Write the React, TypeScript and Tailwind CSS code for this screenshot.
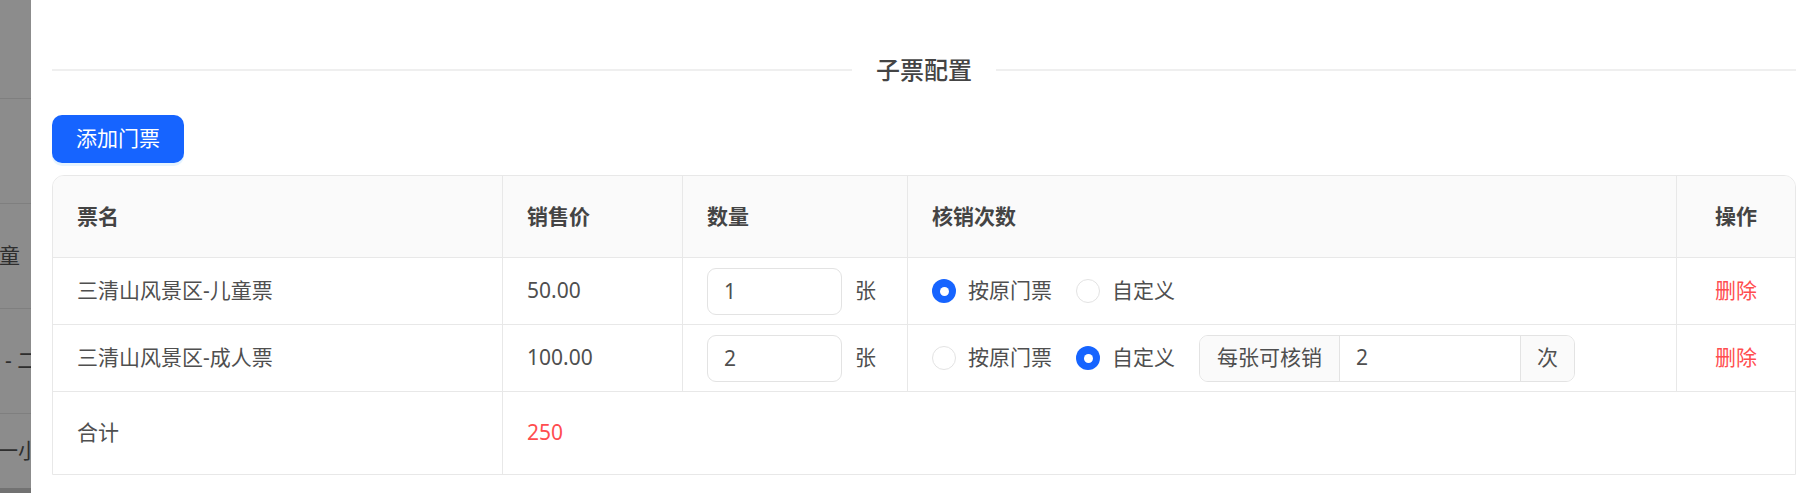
import React, { useState } from 'react';

type Ticket = { id: number; name: string; price: string; qty: string; mode: 'origin' | 'custom'; times: string };

const initial: Ticket[] = [
  { id: 1, name: '三清山风景区-儿童票', price: '50.00', qty: '1', mode: 'origin', times: '' },
  { id: 2, name: '三清山风景区-成人票', price: '100.00', qty: '2', mode: 'custom', times: '2' },
];

const Radio: React.FC<{ checked: boolean; label: string; onClick: () => void }> = ({ checked, label, onClick }) => (
  <label onClick={onClick} className="flex items-center gap-[12px] cursor-pointer">
    {checked ? (
      <span className="w-[24px] h-[24px] rounded-full bg-[#1664ff] flex items-center justify-center">
        <span className="w-[9px] h-[9px] rounded-full bg-white" />
      </span>
    ) : (
      <span className="w-[24px] h-[24px] rounded-full border-[1.5px] border-[#e3e3e3] bg-white" />
    )}
    <span>{label}</span>
  </label>
);

const App: React.FC = () => {
  const [tickets, setTickets] = useState<Ticket[]>(initial);

  const update = (id: number, patch: Partial<Ticket>) =>
    setTickets(ts => ts.map(t => (t.id === id ? { ...t, ...patch } : t)));

  const total = tickets.reduce((sum, t) => sum + parseFloat(t.price) * (parseInt(t.qty) || 0), 0);

  const cell = 'border-r border-[#e8e8e8] px-[24px] flex items-center';

  return (
    <div className="flex w-[1796px] h-[493px] overflow-hidden bg-white text-[21px] text-[#4f4f4f] font-['Noto_Sans','Noto_Sans_CJK_SC',sans-serif]">
      {/* masked page behind the drawer */}
      <div className="w-[31px] shrink-0 bg-[#8c8c8c] overflow-hidden flex flex-col text-[#2e2e2e] whitespace-nowrap">
        <div className="h-[99px] shrink-0 border-b border-[#7f7f7f]" />
        <div className="h-[105px] shrink-0 border-b border-[#7f7f7f]" />
        <div className="h-[105px] shrink-0 border-b border-[#7f7f7f] flex items-center">
          <span className="ml-[-22px]">儿童</span>
        </div>
        <div className="h-[105px] shrink-0 border-b border-[#7f7f7f] flex items-center">
          <span className="ml-[5px]">- 二日票</span>
        </div>
        <div className="h-[74px] shrink-0 flex items-center">
          <span className="ml-[-3px]">一小时</span>
        </div>
        <div className="h-[10px] shrink-0 bg-[#727272]" />
      </div>

      <div className="flex-1 pl-[21px]">
        {/* divider with title */}
        <div className="mt-[54px] h-[32px] flex items-center">
          <div className="flex-1 h-[2px] bg-[#efefef]" />
          <span className="px-[24px] text-[24px] font-medium text-[#444] leading-none">子票配置</span>
          <div className="flex-1 h-[2px] bg-[#efefef]" />
        </div>

        <button className="mt-[29px] h-[48px] px-[24px] rounded-[10px] bg-[#1664ff] text-white shadow-[0_3px_0_rgba(5,145,255,0.1)]">
          添加门票
        </button>

        {/* table */}
        <div className="mt-[12px] border border-[#e8e8e8] rounded-t-[12px] overflow-hidden">
          <div className="grid grid-cols-[450px_180px_225px_769px_1fr] h-[82px] bg-[#fafafa] border-b border-[#e8e8e8] font-bold text-[#444]">
            <div className={cell}>票名</div>
            <div className={cell}>销售价</div>
            <div className={cell}>数量</div>
            <div className={cell}>核销次数</div>
            <div className="flex items-center justify-center">操作</div>
          </div>

          {tickets.map(t => (
            <div key={t.id} className="grid grid-cols-[450px_180px_225px_769px_1fr] h-[67px] border-b border-[#e8e8e8]">
              <div className={cell}>{t.name}</div>
              <div className={cell}>{t.price}</div>
              <div className={`${cell} gap-[13px]`}>
                <input
                  value={t.qty}
                  onChange={e => update(t.id, { qty: e.target.value })}
                  className="w-[135px] h-[47px] px-[16px] border border-[#e3e3e3] rounded-[9px] outline-none text-[#4f4f4f]"
                />
                <span>张</span>
              </div>
              <div className={`${cell} gap-[24px]`}>
                <Radio checked={t.mode === 'origin'} label="按原门票" onClick={() => update(t.id, { mode: 'origin' })} />
                <Radio checked={t.mode === 'custom'} label="自定义" onClick={() => update(t.id, { mode: 'custom' })} />
                {t.mode === 'custom' && (
                  <div className="flex h-[47px] border border-[#e3e3e3] rounded-[9px] overflow-hidden">
                    <span className="w-[140px] bg-[#fafafa] border-r border-[#e3e3e3] flex items-center px-[17px]">每张可核销</span>
                    <input
                      value={t.times}
                      onChange={e => update(t.id, { times: e.target.value })}
                      className="w-[180px] px-[16px] outline-none text-[#4f4f4f]"
                    />
                    <span className="w-[54px] bg-[#fafafa] border-l border-[#e3e3e3] flex items-center justify-center">次</span>
                  </div>
                )}
              </div>
              <div className="flex items-center justify-center">
                <button
                  onClick={() => setTickets(ts => ts.filter(x => x.id !== t.id))}
                  className="text-[#ff4d4f]"
                >
                  删除
                </button>
              </div>
            </div>
          ))}

          <div className="grid grid-cols-[450px_1fr] h-[82px]">
            <div className={cell}>合计</div>
            <div className="px-[24px] flex items-center text-[#ff4d4f]">{total}</div>
          </div>
        </div>
      </div>
    </div>
  );
};

export default App;
